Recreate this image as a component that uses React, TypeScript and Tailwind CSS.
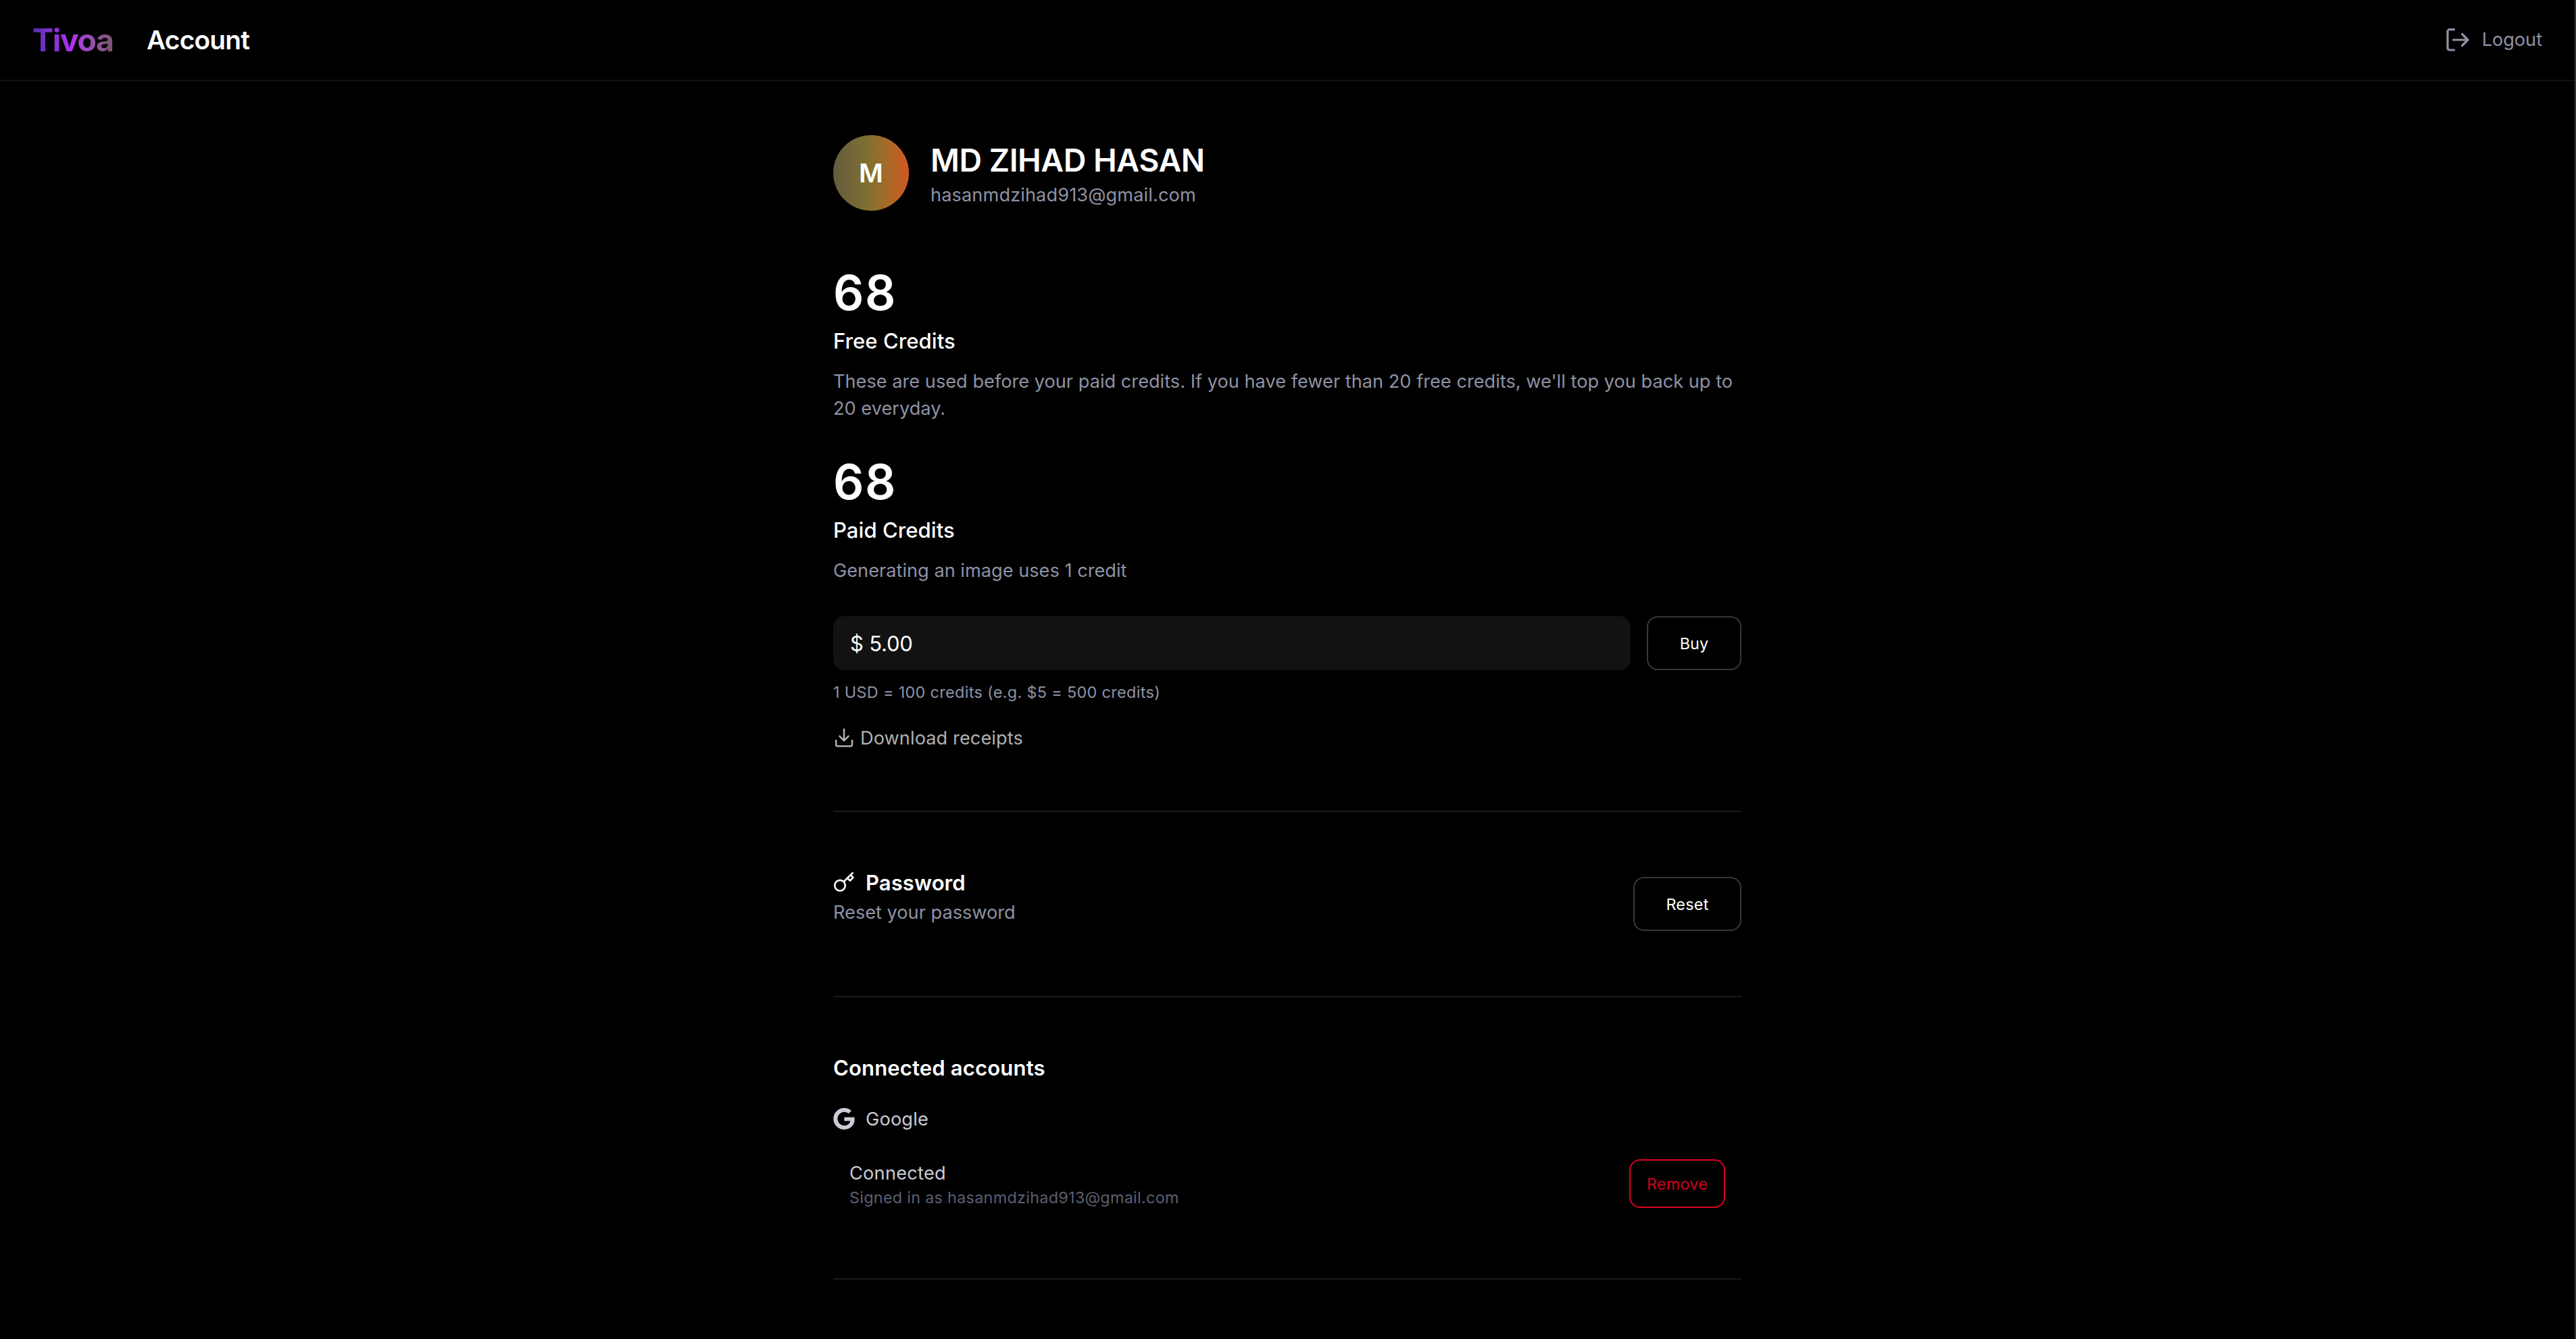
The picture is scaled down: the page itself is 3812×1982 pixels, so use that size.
interface CreditsProps {
  amount: number;
  title: string;
  description: string;
}

const user = {
  name: "MD ZIHAD HASAN",
  email: "hasanmdzihad913@gmail.com",
};

const LogoutIcon = () => (
  <svg width="36" height="36" viewBox="0 0 36 36" fill="none" stroke="currentColor" strokeWidth="3.2" strokeLinecap="round" strokeLinejoin="round">
    <path d="M12.5 2.7H6A3 3 0 0 0 3 5.7V30A3 3 0 0 0 6 33H12.5" />
    <path d="M11.5 18H33M24.5 9.5L33 18L24.5 26.5" />
  </svg>
);

const DownloadIcon = () => (
  <svg width="32" height="32" viewBox="0 0 32 32" fill="none" stroke="currentColor" strokeWidth="2.5" strokeLinecap="round" strokeLinejoin="round">
    <path d="M4.2 20V26.3A2.2 2.2 0 0 0 6.4 28.5H25.8A2.2 2.2 0 0 0 28 26.3V20" />
    <path d="M16 3.6V20.3M9.4 13.7L16 20.3L22.6 13.7" />
  </svg>
);

const KeyIcon = () => (
  <svg className="-mt-0.5" width="32" height="32" viewBox="0 0 32 32" fill="none" stroke="currentColor" strokeWidth="2.6" strokeLinecap="round" strokeLinejoin="round">
    <circle cx="10" cy="20.7" r="7.8" />
    <path d="M15.6 15.2L28.7 2.2" />
    <path d="M26.2 5.4L29.4 8.8L24.9 13.6L21.2 10" />
  </svg>
);

const GoogleIcon = () => (
  <svg className="-mt-0.5" width="32" height="32" viewBox="0 0 24 24" fill="currentColor">
    <path d="M12.24 10.285V14.4h6.806c-.275 1.765-2.056 5.174-6.806 5.174-4.095 0-7.439-3.389-7.439-7.574s3.345-7.574 7.439-7.574c2.33 0 3.891.989 4.785 1.849l3.254-3.138C18.189 1.186 15.479 0 12.24 0c-6.635 0-12 5.365-12 12s5.365 12 12 12c6.926 0 11.52-4.869 11.52-11.726 0-.788-.085-1.39-.189-1.989H12.24z" />
  </svg>
);

const Credits = ({ amount, title, description }: CreditsProps) => (
  <div>
    <div className="text-[71px] leading-[80px] font-semibold tracking-[1.5px]">{amount}</div>
    <h3 className="mt-2 text-[31px] leading-12 font-medium tracking-[0.08px]">{title}</h3>
    <p className="mt-4 text-[27.1px] leading-10 tracking-[0.045px] text-[#8e92a5]">{description}</p>
  </div>
);

export default function App() {
  return (
    <div className="h-[1982px] overflow-hidden border-r-2 border-[#333333] bg-black font-[Inter,sans-serif] text-white">
      <header className="flex h-[120px] items-center justify-between border-b-2 border-[#111111] px-12">
        <div className="flex items-center">
          <div className="w-[169px]">
            <span className="bg-linear-to-r from-[#5b2bb5] via-[#b033ee] to-[#795567] bg-clip-text text-[46.5px] leading-[60px] font-bold tracking-[-1.4px] text-transparent">
              Tivoa
            </span>
          </div>
          <h1 className="text-[38.8px] leading-[60px] font-semibold tracking-[-0.8px]">Account</h1>
        </div>
        <button className="flex items-center gap-[18px] text-[#8e92a5]">
          <LogoutIcon />
          <span className="text-[27.1px] leading-10">Logout</span>
        </button>
      </header>

      <main className="mx-auto w-[1344px] pt-20">
        <div className="flex items-center gap-8">
          <div className="flex size-28 items-center justify-center rounded-full bg-linear-to-r from-[#645c3e] via-[#84712d] to-[#d05721] text-[38.8px] font-semibold">
            M
          </div>
          <div className="pt-[6px]">
            <h2 className="text-[46.5px] leading-[56px] font-semibold tracking-[-0.46px]">{user.name}</h2>
            <p className="mt-1 text-[27.1px] leading-10 tracking-[0.15px] text-[#8e92a5]">{user.email}</p>
          </div>
        </div>

        <section className="mt-[81px]">
          <Credits
            amount={68}
            title="Free Credits"
            description="These are used before your paid credits. If you have fewer than 20 free credits, we'll top you back up to 20 everyday."
          />
          <div className="mt-12">
            <Credits amount={68} title="Paid Credits" description="Generating an image uses 1 credit" />
          </div>

          <div className="mt-[47px] flex gap-6">
            <div className="flex h-20 flex-1 items-center rounded-2xl bg-[#121212] px-[25px] pt-0.5 text-[31px] tracking-[-0.2px]">
              $ 5.00
            </div>
            <button className="h-20 w-[140px] rounded-2xl border-2 border-[#383838] pt-0.5 text-[23.3px] tracking-[0.1px]">
              Buy
            </button>
          </div>
          <p className="mt-[17px] text-[23.3px] leading-8 tracking-[0.38px] text-[#8e92a5]">
            1 USD = 100 credits (e.g. $5 = 500 credits)
          </p>
          <a className="mt-[31px] flex h-10 items-center gap-2 text-[#b0b0b0]">
            <DownloadIcon />
            <span className="pt-0.5 text-[27.1px] leading-10 tracking-[0.12px]">Download receipts</span>
          </a>
        </section>

        <section className="mt-[88px] flex h-[274px] justify-between border-t-2 border-[#1a1a1a] pt-[81px]">
          <div>
            <h3 className="flex items-center gap-4 text-[31px] leading-12 font-semibold tracking-[0.1px]">
              <KeyIcon />
              Password
            </h3>
            <p className="text-[27.1px] leading-10 tracking-[0.03px] text-[#8e92a5]">Reset your password</p>
          </div>
          <button className="mt-[15px] h-20 w-[160px] rounded-2xl border-2 border-[#383838] pt-0.5 text-[23.3px] tracking-[0.3px]">
            Reset
          </button>
        </section>

        <section className="h-[418px] border-t-2 border-[#1a1a1a] pt-[81px]">
          <h3 className="text-[31px] leading-12 font-semibold tracking-[0.17px]">Connected accounts</h3>
          <div className="mt-8 flex h-10 items-center gap-4 text-[#c9cbd6]">
            <GoogleIcon />
            <span className="text-[27.1px] leading-10 tracking-[0.22px]">Google</span>
          </div>
          <div className="mt-[39px] flex h-18 items-center justify-between px-6">
            <div className="pt-0.5">
              <p className="text-[27.1px] leading-10 tracking-[0.28px] text-[#c9cbd6]">Connected</p>
              <p className="text-[23.3px] leading-8 tracking-[0.32px] text-[#5c5f72]">Signed in as {user.email}</p>
            </div>
            <button className="h-18 w-[142px] rounded-2xl border-2 border-[#de0020] pt-0.5 text-[23.3px] tracking-[0.3px] text-[#d0001d]">
              Remove
            </button>
          </div>
        </section>
        <hr className="border-t-2 border-[#1a1a1a]" />
      </main>
    </div>
  );
}
